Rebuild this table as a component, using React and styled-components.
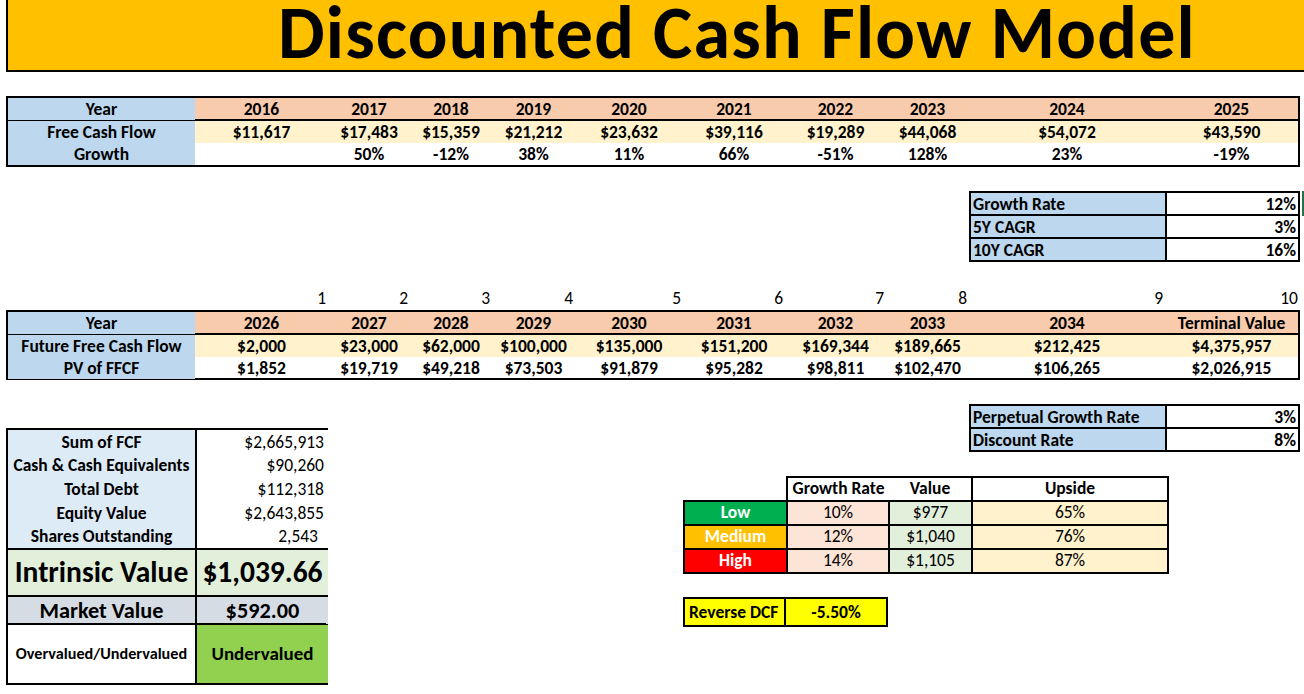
import React from "react";
import styled, { createGlobalStyle } from "styled-components";

const GlobalStyle = createGlobalStyle`
  html, body { margin: 0; padding: 0; background: #fff; }
  body {
    font-family: Carlito, Calibri, Lato, "Liberation Sans", sans-serif;
    color: #000;
  }
  * { box-sizing: border-box; }
`;

const COLS = "187px 133px 82px 82px 83px 108px 102px 101px 83px 196px 133px";
const NUM_COLS = "189px 133px 82px 82px 83px 108px 102px 101px 83px 196px 135px";

const C = {
  gold: "#ffc000",
  blue: "#bdd7ee",
  paleBlue: "#ddebf7",
  peach: "#f8cbad",
  palePeach: "#fce4d6",
  cream: "#fff2cc",
  paleGreen: "#e2efda",
  grey: "#d6dce4",
  green: "#92d050",
  darkGreen: "#00b050",
  red: "#ff0000",
  yellow: "#ffff00",
};

const Page = styled.div`
  width: 1304px;
  height: 694px;
  overflow: hidden;
  padding-left: 6px;
  display: flex;
  flex-direction: column;
`;

const TitleBar = styled.header`
  flex: none;
  height: 72px;
  background: ${C.gold};
  border-left: 2px solid #000;
  border-bottom: 2px solid #000;
  display: flex;
  align-items: flex-start;
  justify-content: center;
  padding-left: 162px;
`;

const Title = styled.h1`
  margin: 0;
  font-size: 74px;
  letter-spacing: 1.2px;
  font-weight: 700;
  line-height: 67px;
  white-space: nowrap;
`;

const DataTable = styled.div`
  flex: none;
  margin-top: ${(p) => p.$mt}px;
  width: 1294px;
  border: 2px solid #000;
`;

const DataRow = styled.div`
  display: grid;
  grid-template-columns: ${COLS};
  height: ${(p) => p.$h}px;
  background: ${(p) => p.$bg || "#fff"};
  border-bottom: ${(p) => (p.$rule ? "2px solid #000" : "0")};
`;

const Cell = styled.div`
  display: flex;
  align-items: center;
  justify-content: ${(p) => p.$align || "center"};
  padding: 0 ${(p) => p.$pad || 0}px;
  font-size: ${(p) => p.$size || 17.5}px;
  font-weight: ${(p) => (p.$normal ? 400 : 700)};
  color: ${(p) => p.$color || "#000"};
  background: ${(p) => p.$bg || "transparent"};
  white-space: nowrap;
  overflow: visible;
`;

const SideRow = styled.div`
  flex: none;
  display: flex;
  justify-content: flex-end;
  padding-right: 4px;
  margin-top: ${(p) => p.$mt}px;
`;

const KeyTable = styled.div`
  position: relative;
  display: grid;
  grid-template-columns: 194px 131px;
  grid-auto-rows: 21px;
  gap: 2px;
  background: #000;
  border: 2px solid #000;
  width: 331px;
`;

const SelectMark = styled.span`
  position: absolute;
  right: -6px;
  top: -2px;
  width: 2px;
  height: 25px;
  background: #217346;
  &::after {
    content: "";
    position: absolute;
    left: 0;
    bottom: 0;
    width: 4px;
    height: 2px;
    background: #217346;
  }
`;

const NumberRow = styled.div`
  flex: none;
  display: grid;
  grid-template-columns: ${NUM_COLS};
  height: 24px;
  margin-top: 24px;
`;

const Bottom = styled.div`
  flex: none;
  display: flex;
  align-items: flex-start;
`;

const LeftTable = styled.div`
  margin-top: 48px;
  width: 322px;
  border: 2px solid #000;
  display: flex;
  flex-direction: column;
`;

const InfoRow = styled.div`
  display: grid;
  grid-template-columns: 187px 131px;
  column-gap: 2px;
  background: #000;
  height: ${(p) => p.$h}px;
  border-top: ${(p) => (p.$rule ? "2px solid #000" : "0")};
`;

const RightCol = styled.div`
  margin-left: 355px;
  width: 617px;
  display: flex;
  flex-direction: column;
`;

const PerpTable = styled(KeyTable)`
  align-self: flex-end;
  margin-top: 24px;
`;

const Scenario = styled.table`
  margin-top: 24px;
  border-collapse: collapse;
  table-layout: fixed;
  width: 484px;
`;

const Col = styled.col`
  width: ${(p) => p.$w}px;
`;

const ScRow = styled.tr`
  height: ${(p) => p.$h}px;
`;

const ScCell = styled.td`
  padding: 0;
  text-align: center;
  font-size: 17.5px;
  font-weight: ${(p) => (p.$bold ? 700 : 400)};
  color: ${(p) => p.$color || "#000"};
  background: ${(p) => p.$bg || "#fff"};
  border-top: 2px solid #000;
  border-bottom: 2px solid #000;
  border-left: ${(p) => (p.$noLeft ? "0" : "2px solid #000")};
  border-right: ${(p) => (p.$noRight ? "0" : "2px solid #000")};
  white-space: nowrap;
  line-height: 1;
`;

const BlankCell = styled.td`
  border: 0;
  padding: 0;
`;

const Reverse = styled.div`
  margin-top: 23px;
  display: grid;
  grid-template-columns: 99px 100px;
  grid-auto-rows: 26px;
  gap: 2px;
  background: #000;
  border: 2px solid #000;
  width: 205px;
`;

const history = {
  years: ["2016", "2017", "2018", "2019", "2020", "2021", "2022", "2023", "2024", "2025"],
  fcf: ["$11,617", "$17,483", "$15,359", "$21,212", "$23,632", "$39,116", "$19,289", "$44,068", "$54,072", "$43,590"],
  growth: ["", "50%", "-12%", "38%", "11%", "66%", "-51%", "128%", "23%", "-19%"],
};

const future = {
  years: ["2026", "2027", "2028", "2029", "2030", "2031", "2032", "2033", "2034", "Terminal Value"],
  ffcf: ["$2,000", "$23,000", "$62,000", "$100,000", "$135,000", "$151,200", "$169,344", "$189,665", "$212,425", "$4,375,957"],
  pv: ["$1,852", "$19,719", "$49,218", "$73,503", "$91,879", "$95,282", "$98,811", "$102,470", "$106,265", "$2,026,915"],
};

const summary = [
  ["Sum of FCF", "$2,665,913"],
  ["Cash & Cash Equivalents", "$90,260"],
  ["Total Debt", "$112,318"],
  ["Equity Value", "$2,643,855"],
  ["Shares Outstanding", "2,543", 10],
];

const scenarios = [
  { name: "Low", color: C.darkGreen, rate: "10%", value: "$977", upside: "65%" },
  { name: "Medium", color: C.gold, rate: "12%", value: "$1,040", upside: "76%" },
  { name: "High", color: C.red, rate: "14%", value: "$1,105", upside: "87%" },
];

function YearTable({ mt, lastH, label1, label2, label3, years, row2, row3 }) {
  return (
    <DataTable $mt={mt}>
      <DataRow $h={23} $rule $bg={C.peach}>
        <Cell $bg={C.blue}>{label1}</Cell>
        {years.map((y) => (
          <Cell key={y}>{y}</Cell>
        ))}
      </DataRow>
      <DataRow $h={22} $bg={C.cream}>
        <Cell $bg={C.blue}>{label2}</Cell>
        {row2.map((v, i) => (
          <Cell key={i}>{v}</Cell>
        ))}
      </DataRow>
      <DataRow $h={lastH}>
        <Cell $bg={C.blue}>{label3}</Cell>
        {row3.map((v, i) => (
          <Cell key={i}>{v}</Cell>
        ))}
      </DataRow>
    </DataTable>
  );
}

function KeyValue({ rows, As = KeyTable, mark }) {
  return (
    <As>
      {rows.map(([k, v]) => (
        <React.Fragment key={k}>
          <Cell $bg={C.blue} $align="flex-start" $pad={2}>{k}</Cell>
          <Cell $bg="#fff" $align="flex-end" $pad={2}>{v}</Cell>
        </React.Fragment>
      ))}
      {mark && <SelectMark />}
    </As>
  );
}

export default function App() {
  return (
    <>
      <GlobalStyle />
      <Page>
        <TitleBar>
          <Title>Discounted Cash Flow Model</Title>
        </TitleBar>

        <YearTable
          mt={24}
          lastH={22}
          label1="Year"
          label2="Free Cash Flow"
          label3="Growth"
          years={history.years}
          row2={history.fcf}
          row3={history.growth}
        />

        <SideRow $mt={24}>
          <KeyValue
            mark
            rows={[
              ["Growth Rate", "12%"],
              ["5Y CAGR", "3%"],
              ["10Y CAGR", "16%"],
            ]}
          />
        </SideRow>

        <NumberRow>
          <span />
          {[1, 2, 3, 4, 5, 6, 7, 8, 9, 10].map((n) => (
            <Cell key={n} $normal $align="flex-end" $pad={2}>
              {n}
            </Cell>
          ))}
        </NumberRow>

        <YearTable
          mt={0}
          lastH={21}
          label1="Year"
          label2="Future Free Cash Flow"
          label3="PV of FFCF"
          years={future.years}
          row2={future.ffcf}
          row3={future.pv}
        />

        <Bottom>
          <LeftTable>
            {summary.map(([k, v, pad]) => (
              <InfoRow key={k} $h={23.6}>
                <Cell $bg={C.paleBlue}>{k}</Cell>
                <Cell $bg="#fff" $normal $align="flex-end" $pad={pad || 4}>{v}</Cell>
              </InfoRow>
            ))}
            <InfoRow $h={47} $rule>
              <Cell $bg={C.paleGreen} $size={29.5}>Intrinsic Value</Cell>
              <Cell $bg={C.paleGreen} $size={29.5}>$1,039.66</Cell>
            </InfoRow>
            <InfoRow $h={28} $rule>
              <Cell $bg={C.grey} $size={22.3}>Market Value</Cell>
              <Cell $bg={C.grey} $size={22.3}>$592.00</Cell>
            </InfoRow>
            <InfoRow $h={60} $rule>
              <Cell $bg="#fff" $size={16.2}>Overvalued/Undervalued</Cell>
              <Cell $bg={C.green} $size={19}>Undervalued</Cell>
            </InfoRow>
          </LeftTable>

          <RightCol>
            <KeyValue
              As={PerpTable}
              rows={[
                ["Perpetual Growth Rate", "3%"],
                ["Discount Rate", "8%"],
              ]}
            />

            <Scenario>
              <colgroup>
                <Col $w={103} />
                <Col $w={102} />
                <Col $w={83} />
                <Col $w={196} />
              </colgroup>
              <tbody>
                <ScRow $h={24}>
                  <BlankCell />
                  <ScCell $bold $noRight>Growth Rate</ScCell>
                  <ScCell $bold $noLeft>Value</ScCell>
                  <ScCell $bold>Upside</ScCell>
                </ScRow>
                {scenarios.map((s) => (
                  <ScRow key={s.name} $h={24}>
                    <ScCell $bold $color="#fff" $bg={s.color}>{s.name}</ScCell>
                    <ScCell $bg={C.palePeach}>{s.rate}</ScCell>
                    <ScCell $bg={C.paleGreen}>{s.value}</ScCell>
                    <ScCell $bg={C.cream}>{s.upside}</ScCell>
                  </ScRow>
                ))}
              </tbody>
            </Scenario>

            <Reverse>
              <Cell $bg={C.yellow} $align="flex-start" $pad={4}>Reverse DCF</Cell>
              <Cell $bg={C.yellow}>-5.50%</Cell>
            </Reverse>
          </RightCol>
        </Bottom>
      </Page>
    </>
  );
}
